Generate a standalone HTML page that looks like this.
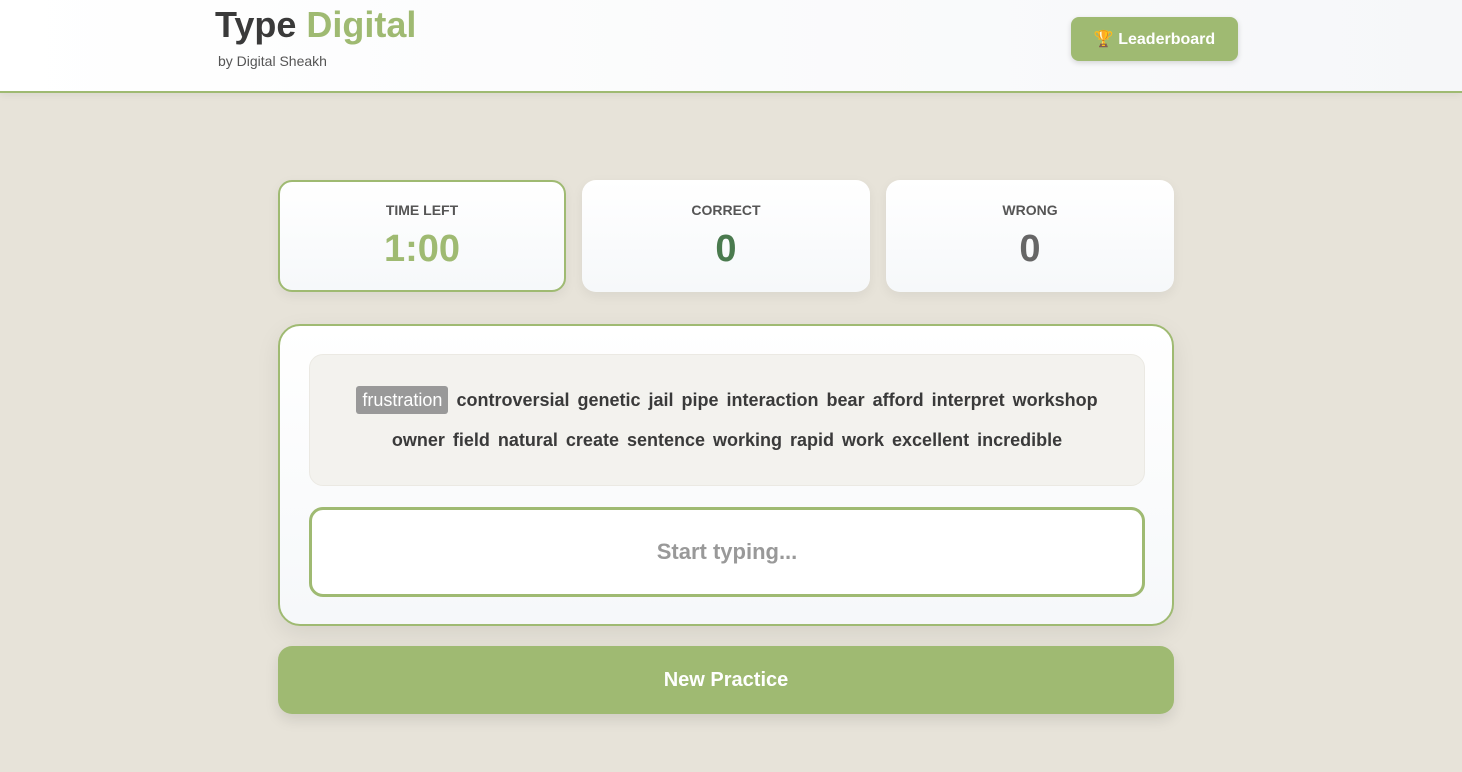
<!DOCTYPE html>
<html><head><style>
*{box-sizing:border-box;margin:0;padding:0}
body{width:1462px;height:772px;background:#e7e3d9;font-family:"Liberation Sans",sans-serif;position:relative;overflow:hidden}
.hdr{position:absolute;left:0;top:0;width:1462px;height:93px;background:linear-gradient(90deg,#fff,#f6f7f9);border-bottom:2px solid #9fba72;box-shadow:0 2px 8px rgba(0,0,0,.06)}
.logo{position:absolute;left:215px;top:4px;font-size:36px;font-weight:bold;color:#3a3a3a;letter-spacing:0}
.logo span{color:#9fba72}
.sub{position:absolute;left:218px;top:53px;font-size:14px;color:#555}
.lb{position:absolute;left:1071px;top:17px;width:167px;height:44px;background:#9fba72;border-radius:8px;color:#fff;font-weight:bold;font-size:16px;line-height:46px;text-align:center;box-shadow:0 2px 6px rgba(0,0,0,.15)}
.card{position:absolute;top:180px;width:288px;height:112px;background:linear-gradient(#fff,#f6f8fa);border-radius:14px;text-align:center;box-shadow:0 4px 12px rgba(0,0,0,.06)}
.card .t{margin-top:22px;font-size:14px;color:#555;font-weight:bold}
.card .v{font-size:38px;font-weight:bold;margin-top:10px}
.main{position:absolute;left:278px;top:324px;width:896px;height:302px;background:linear-gradient(#fff,#f6f8fa);border:2px solid #9fba72;border-radius:22px;box-shadow:0 8px 24px rgba(0,0,0,.08)}
.words{position:absolute;left:29px;top:28px;width:836px;height:132px;background:#f3f2ee;border:1px solid #ebe9e3;border-radius:14px;text-align:center;padding-top:25px;font-size:18px;font-weight:bold;color:#3a3a3a;line-height:40px;word-spacing:3px}
.hl{background:#999;color:#fff;padding:4px 6px;border-radius:3px;font-weight:normal;word-spacing:0}
.inp{position:absolute;left:29px;top:181px;width:836px;height:90px;background:#fff;border:3px solid #9fba72;border-radius:14px;text-align:center;line-height:84px;font-size:22px;font-weight:bold;color:#999}
.btn{position:absolute;left:278px;top:646px;width:896px;height:68px;background:#9fba72;border-radius:14px;color:#fff;font-weight:bold;font-size:20px;text-align:center;line-height:68px;box-shadow:0 6px 14px rgba(0,0,0,.1)}
</style></head><body>
<div class="hdr">
<div class="logo">Type <span>Digital</span></div>
<div class="sub">by Digital Sheakh</div>
<div class="lb">🏆 Leaderboard</div>
</div>
<div class="card" style="left:278px;border:2px solid #9fba72"><div class="t" style="margin-top:20px">TIME LEFT</div><div class="v" style="color:#9fba72">1:00</div></div>
<div class="card" style="left:582px"><div class="t">CORRECT</div><div class="v" style="color:#4a7a4e">0</div></div>
<div class="card" style="left:886px"><div class="t">WRONG</div><div class="v" style="color:#666">0</div></div>
<div class="main">
<div class="words"><span class="hl">frustration</span> controversial genetic jail pipe interaction bear afford interpret workshop<br>owner field natural create sentence working rapid work excellent incredible</div>
<div class="inp">Start typing...</div>
</div>
<div class="btn">New Practice</div>
</body></html>
